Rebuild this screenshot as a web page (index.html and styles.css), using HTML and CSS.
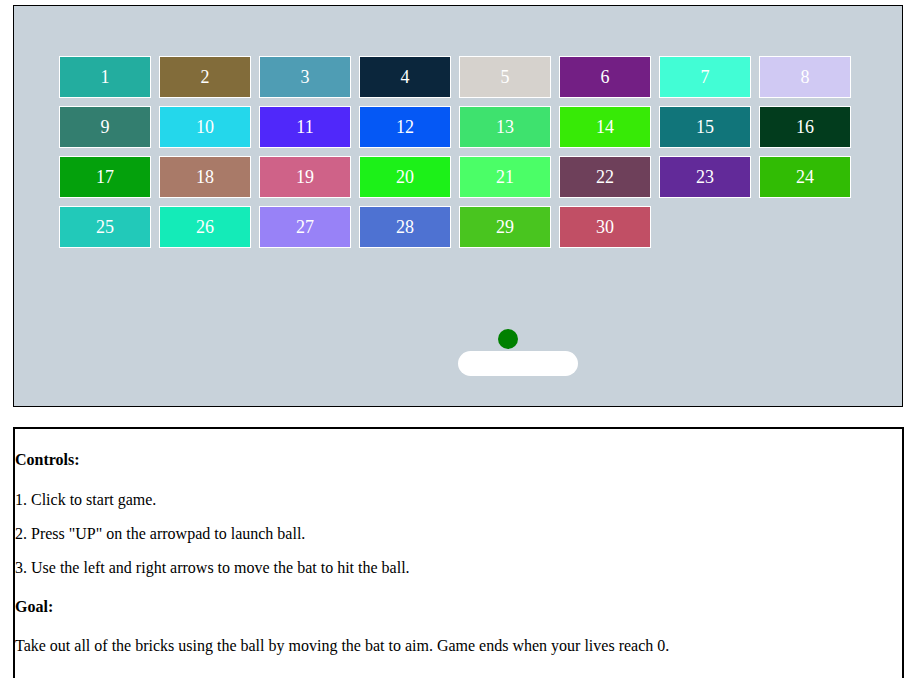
FILE: index.html
```html
<!DOCTYPE html>
<html>
<head>
<meta charset="utf-8">
<title>Breakout</title>
<link rel="stylesheet" href="styles.css">
</head>
<body>
<div class="page">
  <div class="game">
    <div class="bricks">
      <div class="brick c1">1</div>
      <div class="brick c2">2</div>
      <div class="brick c3">3</div>
      <div class="brick c4">4</div>
      <div class="brick c5">5</div>
      <div class="brick c6">6</div>
      <div class="brick c7">7</div>
      <div class="brick c8">8</div>
      <div class="brick c9">9</div>
      <div class="brick c10">10</div>
      <div class="brick c11">11</div>
      <div class="brick c12">12</div>
      <div class="brick c13">13</div>
      <div class="brick c14">14</div>
      <div class="brick c15">15</div>
      <div class="brick c16">16</div>
      <div class="brick c17">17</div>
      <div class="brick c18">18</div>
      <div class="brick c19">19</div>
      <div class="brick c20">20</div>
      <div class="brick c21">21</div>
      <div class="brick c22">22</div>
      <div class="brick c23">23</div>
      <div class="brick c24">24</div>
      <div class="brick c25">25</div>
      <div class="brick c26">26</div>
      <div class="brick c27">27</div>
      <div class="brick c28">28</div>
      <div class="brick c29">29</div>
      <div class="brick c30">30</div>
    </div>
    <div class="ball"></div>
    <div class="bat"></div>
  </div>
  <div class="info">
    <h4>Controls:</h4>
    <p>1. Click to start game.</p>
    <p>2. Press "UP" on the arrowpad to launch ball.</p>
    <p>3. Use the left and right arrows to move the bat to hit the ball.</p>
    <h4>Goal:</h4>
    <p>Take out all of the bricks using the ball by moving the bat to aim. Game ends when your lives reach 0.</p>
  </div>
</div>
</body>
</html>
```
FILE: styles.css
```css
html, body {
  margin: 0;
  padding: 0;
  background: #ffffff;
  font-family: "Liberation Serif", "Times New Roman", serif;
  color: #000;
}
.page {
  padding: 5px 0 0 13px;
}
.game {
  position: relative;
  width: 888px;
  height: 400px;
  border: 1px solid #000;
  background: #c8d2da;
  box-sizing: content-box;
}
.bricks {
  display: grid;
  grid-template-columns: repeat(8, 92px);
  grid-auto-rows: 42px;
  column-gap: 8px;
  row-gap: 8px;
  padding: 50px 0 0 45px;
}
.brick {
  box-sizing: border-box;
  border: 1px solid #ffffff;
  color: #ffffff;
  font-size: 18px;
  display: flex;
  align-items: center;
  justify-content: center;
}
.ball {
  position: absolute;
  left: 484px;
  top: 323px;
  width: 20px;
  height: 20px;
  border-radius: 50%;
  background: #008000;
}
.bat {
  position: absolute;
  left: 444px;
  top: 345px;
  width: 120px;
  height: 25px;
  border-radius: 12.5px;
  background: #ffffff;
}
.info {
  margin-top: 20px;
  padding-top: 1px;
  width: 891px;
  height: 300px;
  box-sizing: border-box;
  border: 2px solid #000;
  font-size: 16px;
}
.info h4 {
  font-size: 16px;
  margin: 21.28px 0;
}
.info p {
  margin: 16px 0;
}
.c1 { background: #23ad9f; }
.c2 { background: #826c3a; }
.c3 { background: #4f9db4; }
.c4 { background: #0b263c; }
.c5 { background: #d6d2cd; }
.c6 { background: #731f84; }
.c7 { background: #42fdd5; }
.c8 { background: #d0c9f3; }
.c9 { background: #337e6f; }
.c10 { background: #24d7eb; }
.c11 { background: #5028fa; }
.c12 { background: #0558f5; }
.c13 { background: #3ee26e; }
.c14 { background: #37ea06; }
.c15 { background: #11757a; }
.c16 { background: #023c1d; }
.c17 { background: #04a10c; }
.c18 { background: #a97a68; }
.c19 { background: #cf6288; }
.c20 { background: #1cf118; }
.c21 { background: #4bfe67; }
.c22 { background: #6e405a; }
.c23 { background: #622a99; }
.c24 { background: #31bc04; }
.c25 { background: #22c9b9; }
.c26 { background: #14ebb8; }
.c27 { background: #9882f7; }
.c28 { background: #4e72d2; }
.c29 { background: #49c51f; }
.c30 { background: #c14f65; }
```
